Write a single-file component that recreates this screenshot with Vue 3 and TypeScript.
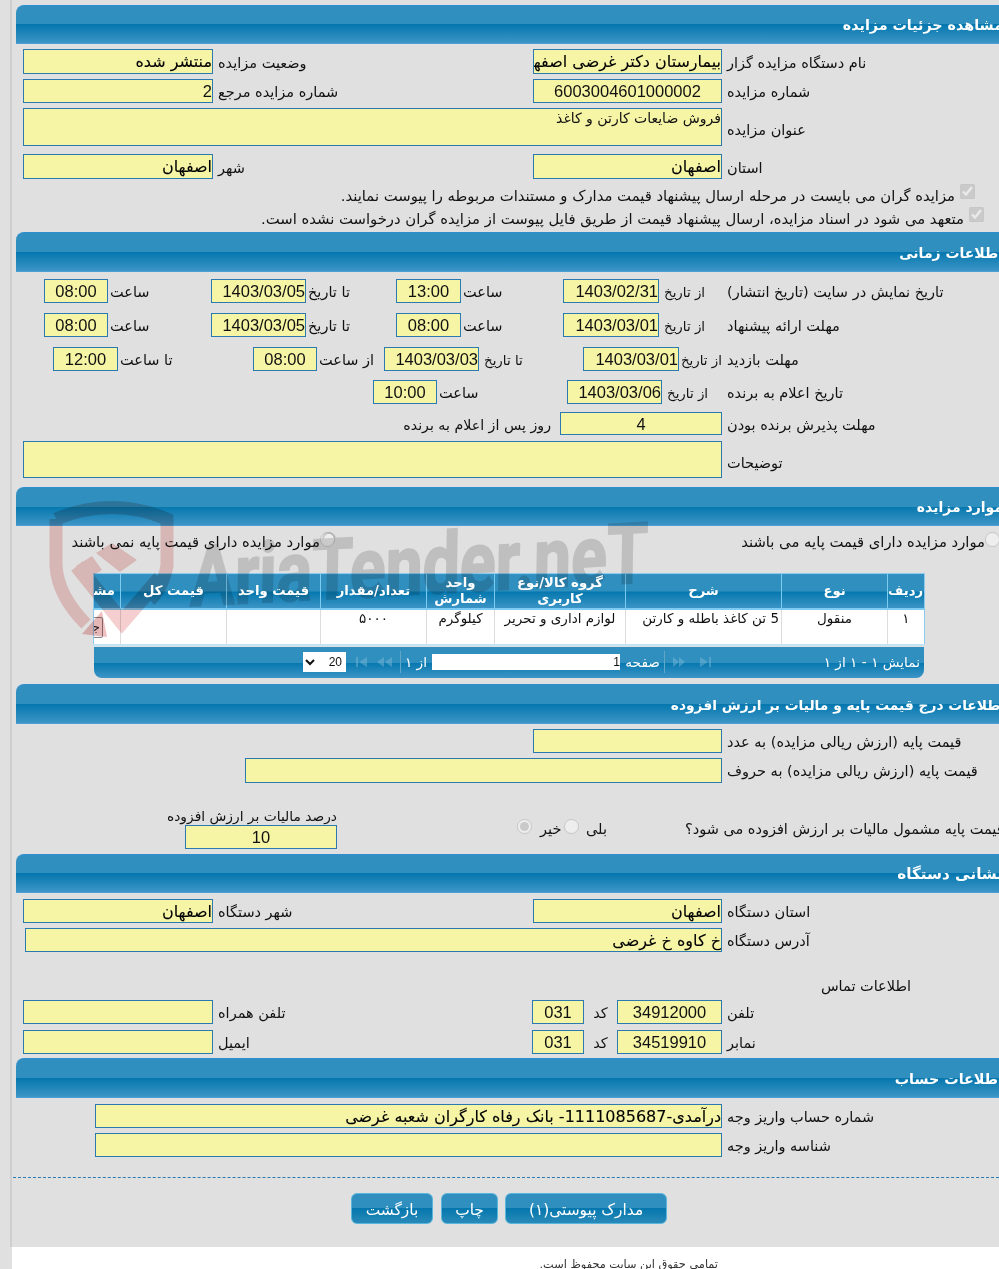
<script setup lang="ts">
const cols: string[] = ['ردیف', 'نوع', 'شرح', 'گروه کالا/نوع کاربری', 'واحد شمارش', 'تعداد/مقدار', 'قیمت واحد', 'قیمت کل', 'مشاهده']
const cells: string[] = ['۱', 'منقول', '5 تن کاغذ باطله و کارتن', 'لوازم اداری و تحریر', 'کیلوگرم', '۵۰۰۰', '', '']
</script>

<template>
  <div class="page">
    <div class="main">
      <div class="head first">مشاهده جزئیات مزایده</div>
      <div class="r g2 h25 m5">
        <div class="lab">نام دستگاه مزایده گزار</div>
        <div class="box strong">بیمارستان دکتر غرضی اصفهان</div>
        <div class="lab">وضعیت مزایده</div>
        <div class="box strong">منتشر شده</div>
      </div>
      <div class="r g2 h24 m5">
        <div class="lab">شماره مزایده</div>
        <div class="box center">6003004601000002</div>
        <div class="lab">شماره مزایده مرجع</div>
        <div class="box">2</div>
      </div>
      <div class="r gw h38 m5">
        <div class="lab lo">عنوان مزایده</div>
        <div class="box top small">فروش ضایعات کارتن و کاغذ</div>
      </div>
      <div class="r g2 h25 m8">
        <div class="lab">استان</div>
        <div class="box strong">اصفهان</div>
        <div class="lab">شهر</div>
        <div class="box strong">اصفهان</div>
      </div>
      <div class="chk c1"><input type="checkbox" checked disabled /><span>مزایده گران می بایست در مرحله ارسال پیشنهاد قیمت مدارک و مستندات مربوطه را پیوست نمایند.</span></div>
      <div class="chk c2"><input type="checkbox" checked disabled /><span>متعهد می شود در اسناد مزایده، ارسال پیشنهاد قیمت از طریق فایل پیوست از مزایده گران درخواست نشده است.</span></div>

      <div class="head h2">اطلاعات زمانی</div>
      <div class="r t1 h24 m7">
        <div class="lab">تاریخ نمایش در سایت (تاریخ انتشار)</div>
        <div class="lab nar">از تاریخ</div>
        <div class="box">1403/02/31</div>
        <div class="lab p2">ساعت</div>
        <div class="box center">13:00</div>
        <div class="lab p2">تا تاریخ</div>
        <div class="box">1403/03/05</div>
        <div class="lab p2">ساعت</div>
        <div class="box center">08:00</div>
      </div>
      <div class="r t1 h24 m10">
        <div class="lab">مهلت ارائه پیشنهاد</div>
        <div class="lab nar">از تاریخ</div>
        <div class="box">1403/03/01</div>
        <div class="lab p2">ساعت</div>
        <div class="box center">08:00</div>
        <div class="lab p2">تا تاریخ</div>
        <div class="box">1403/03/05</div>
        <div class="lab p2">ساعت</div>
        <div class="box center">08:00</div>
      </div>
      <div class="r t3 h24 m10">
        <div class="lab">مهلت بازدید</div>
        <div class="lab nar">از تاریخ</div>
        <div class="box">1403/03/01</div>
        <div class="lab nar">تا تاریخ</div>
        <div class="box">1403/03/03</div>
        <div class="lab p2">از ساعت</div>
        <div class="box center">08:00</div>
        <div class="lab p2">تا ساعت</div>
        <div class="box center">12:00</div>
      </div>
      <div class="r t4 h24 m9">
        <div class="lab">تاریخ اعلام به برنده</div>
        <div class="lab nar">از تاریخ</div>
        <div class="box">1403/03/06</div>
        <div class="lab p2">ساعت</div>
        <div class="box center">10:00</div>
      </div>
      <div class="r t5 h23 m8">
        <div class="lab">مهلت پذیرش برنده بودن</div>
        <div class="box center">4</div>
        <div class="lab p9">روز پس از اعلام به برنده</div>
      </div>
      <div class="r gd h37 m6">
        <div class="lab lo">توضیحات</div>
        <div class="box"></div>
      </div>

      <div class="head h3">موارد مزایده</div>
      <div class="radios">
        <label class="rad ra"><input type="radio" disabled /><span>موارد مزایده دارای قیمت پایه می باشند</span></label>
        <label class="rad rb"><input type="radio" disabled /><span>موارد مزایده دارای قیمت پایه نمی باشند</span></label>
      </div>
      <div class="grid-wrap">
        <table class="grid">
          <thead>
            <tr>
              <th v-for="c in cols" :key="c"><span>{{ c }}</span></th>
            </tr>
          </thead>
          <tbody>
            <tr>
              <td v-for="(c, i) in cells" :key="i">{{ c }}</td>
              <td class="act"><button class="mini" type="button">جزئیات</button></td>
            </tr>
          </tbody>
        </table>
        <div class="pager">
          <div class="status">نمایش ۱ - ۱ از ۱</div>
          <svg class="pi w12" viewBox="0 0 12 10"><path d="M0 0 L8 5 L0 10 Z M9 0 H11 V10 H9 Z" /></svg>
          <svg class="pi w12 g15" viewBox="0 0 12 10"><path d="M0 0 L6 5 L0 10 Z M6 0 L12 5 L6 10 Z" /></svg>
          <i class="sep s8"></i>
          <div class="plab">صفحه</div>
          <div class="pinput">1</div>
          <div class="pof">از ۱</div>
          <i class="sep s6"></i>
          <svg class="pi w15 g8" viewBox="0 0 15 10"><path d="M7 0 L0 5 L7 10 Z M15 0 L8 5 L15 10 Z" /></svg>
          <svg class="pi w12 g10" viewBox="0 0 12 10"><path d="M12 0 L4 5 L12 10 Z M1 0 H3 V10 H1 Z" /></svg>
          <select class="psel"><option>20</option></select>
        </div>
      </div>

      <div class="head h4">اطلاعات درج قیمت پایه و مالیات بر ارزش افزوده</div>
      <div class="r gw2 h24 m5">
        <div class="lab">قیمت پایه (ارزش ریالی مزایده) به عدد</div>
        <div class="box"></div>
      </div>
      <div class="r gw3 h25 m5">
        <div class="lab">قیمت پایه (ارزش ریالی مزایده) به حروف</div>
        <div class="box"></div>
      </div>
      <div class="taxrow">
        <div class="taxq">قیمت پایه مشمول مالیات بر ارزش افزوده می شود؟</div>
        <label class="rad rc"><input type="radio" disabled /><span>بلی</span></label>
        <label class="rad rd"><input type="radio" checked disabled /><span>خیر</span></label>
        <div class="tax">
          <div class="taxl">درصد مالیات بر ارزش افزوده</div>
          <div class="box center taxb">10</div>
        </div>
      </div>

      <div class="head h5">نشانی دستگاه</div>
      <div class="r g2 h24 m6">
        <div class="lab">استان دستگاه</div>
        <div class="box strong">اصفهان</div>
        <div class="lab">شهر دستگاه</div>
        <div class="box strong">اصفهان</div>
      </div>
      <div class="r ga h24 m5">
        <div class="lab">آدرس دستگاه</div>
        <div class="box strong">خ کاوه خ غرضی</div>
      </div>
      <div class="contact">اطلاعات تماس</div>
      <div class="r tel h24">
        <div class="lab">تلفن</div>
        <div class="box center">34912000</div>
        <div class="lab p12">کد</div>
        <div class="box center">031</div>
        <div class="lab">تلفن همراه</div>
        <div class="box"></div>
      </div>
      <div class="r tel h24 m6">
        <div class="lab">نمابر</div>
        <div class="box center">34519910</div>
        <div class="lab p12">کد</div>
        <div class="box center">031</div>
        <div class="lab">ایمیل</div>
        <div class="box"></div>
      </div>

      <div class="head h6">اطلاعات حساب</div>
      <div class="r gb h24 m6">
        <div class="lab">شماره حساب واریز وجه</div>
        <div class="box strong">درآمدی-1111085687- بانک رفاه کارگران شعبه غرضی</div>
      </div>
      <div class="r gb h24 m5">
        <div class="lab">شناسه واریز وجه</div>
        <div class="box"></div>
      </div>
      <div class="dash"></div>
      <div class="btns">
        <button class="btn b1" type="button">مدارک پیوستی(۱)</button>
        <button class="btn b2" type="button">چاپ</button>
        <button class="btn b3" type="button">بازگشت</button>
      </div>
    </div>
    <div class="foot">تمامی حقوق این سایت محفوظ است.</div>

    <svg class="mark" viewBox="0 0 999 1269" width="999" height="1269">
      <g fill="none" stroke="#f5cfcf" stroke-width="13">
        <path d="M56 519 Q112 496 167 519 V566 Q162 590 150 600" />
        <path d="M56 519 V566 Q58 596 86 624" />
      </g>
      <path d="M77 566 L122 622 L160 578" fill="none" stroke="#f5cfcf" stroke-width="15" />
      <path d="M76 566 L92 556 L102 570 L86 580 Z M96 553 L112 543 L137 560 L120 572 Z" fill="#f5cfcf" />
      <path d="M82 634 L107 637 L102 611 Z" fill="#f0bfbf" />
      <text class="mtext" transform="translate(190 606) rotate(-3) skewX(-4)" textLength="458" lengthAdjust="spacingAndGlyphs">AriaTender.neT</text>
      <circle cx="329" cy="539" r="6" fill="none" stroke="#d8d8d8" stroke-width="2" />
    </svg>
  </div>
</template>

<style>
html, body { margin: 0; padding: 0; background: #fff; }
</style>

<style scoped>
.page {
  position: relative;
  isolation: isolate;
  width: 999px;
  height: 1269px;
  overflow: hidden;
  background: #e0e0e0;
  font-family: "DejaVu Sans", "Liberation Sans", sans-serif;
  font-size: 14.5px;
  color: #111;
}
.main {
  height: 1247px;
  background: #e0e0e0;
  border-left: 2px solid #cfcfcf;
  margin-left: 10px;
  overflow: hidden;
  position: relative;
  box-sizing: border-box;
  width: 989px;
  padding-top: 5px;
}
.head {
  box-sizing: border-box;
  height: 39px;
  margin-left: 4px;
  margin-right: -20px;
  padding-right: 16px;
  direction: rtl;
  border-top: 1px solid #2d8ed0;
  border-bottom: 1px solid #4a9fd6;
  border-top-left-radius: 8px;
  background: linear-gradient(#308fbe 0, #2f8fbf 50%, #0477ae 50%, #3d95c6 100%);
  color: #fff;
  font-weight: 700;
  font-size: 14px;
  line-height: 39px;
  white-space: nowrap;
}
.first { font-size: 14.3px; }
.h2 { margin-top: 2px; height: 40px; line-height: 40px; }
.h3 { margin-top: 9px; }
.h4 { margin-top: 6px; height: 40px; padding-right: 14px; font-size: 13.8px; line-height: 40px; }
.h5 { margin-top: 5px; font-size: 15.2px; }
.h6 { margin-top: 4px; height: 40px; font-size: 14.3px; line-height: 40px; }
.r {
  display: grid;
  direction: rtl;
  align-items: center;
  width: 999px;
  box-sizing: border-box;
  margin-left: -12px;
  position: relative;
}
.g2 { grid-template-columns: 277px 189px 320px 190px; }
.gw { grid-template-columns: 277px 699px; }
.gd { grid-template-columns: 277px 699px; }
.ga { grid-template-columns: 277px 697px; }
.gb { grid-template-columns: 277px 627px; }
.gw2 { grid-template-columns: 277px 189px; }
.gw3 { grid-template-columns: 277px 477px; }
.t1 { grid-template-columns: 277px 63px 96px 102px 65px 90px 95px 103px 64px; }
.t3 { grid-template-columns: 277px 43px 96px 104px 95px 67px 64px 135px 65px; }
.t4 { grid-template-columns: 277px 60px 95px 130px 64px; }
.t5 { grid-template-columns: 277px 162px auto; }
.tel { grid-template-columns: 277px 105px 33px 52px 319px 190px; }
.h23 { height: 23px; }
.h24 { height: 24px; }
.h25 { height: 25px; }
.h37 { height: 37px; }
.h38 { height: 38px; }
.m5 { margin-top: 5px; }
.m6 { margin-top: 6px; }
.m7 { margin-top: 7px; }
.m8 { margin-top: 8px; }
.m9 { margin-top: 9px; }
.m10 { margin-top: 10px; }
.lab {
  box-sizing: border-box;
  padding-left: 5px;
  padding-top: 2px;
  text-align: left;
  white-space: nowrap;
}
.lo { padding-top: 6px; }
.nar { font-size: 13.4px; }
.p2 { padding-left: 2px; }
.p12 { padding-left: 0; text-align: center; }
.p9 { padding-right: 9px; text-align: right; font-size: 14.2px; }
.box {
  box-sizing: border-box;
  height: 100%;
  border: 1px solid #2a7ab0;
  background: #f6f5a6;
  font-family: "Liberation Sans", "DejaVu Sans", sans-serif;
  font-size: 16.5px;
  line-height: 23px;
  white-space: nowrap;
  overflow: hidden;
  text-align: right;
  color: #111;
  padding-left: 0;
}
.strong {
  font-family: "DejaVu Sans", sans-serif;
  font-size: 16px;
  color: #000;
  -webkit-text-stroke: 0.1px #000;
}
.center { text-align: center; }
.top { line-height: 18px; }
.small { font-family: "DejaVu Sans", sans-serif; font-size: 14px; }
.chk {
  direction: rtl;
  display: flex;
  align-items: flex-start;
  white-space: nowrap;
  height: 23px;
  line-height: 24px;
  font-size: 14.8px;
}
.c1 { margin-top: 5px; padding-right: 24px; }
.c2 { margin-top: 0; padding-right: 15px; }
.chk input { width: 15px; height: 15px; margin: 0 0 0 5px; flex: none; }
.radios {
  position: relative;
  height: 47px;
  direction: rtl;
  margin-left: -12px;
  width: 999px;
  font-size: 14.8px;
}
.rad {
  display: flex;
  direction: rtl;
  align-items: center;
  white-space: nowrap;
}
.rad input { width: 15px; height: 15px; margin: -5px 0 0; flex: none; }
.ra { float: right; margin-top: 7px; margin-right: -1px; }
.rb { position: absolute; right: 664px; top: 7px; }
.grid-wrap { margin-left: 81px; width: 832px; }
.grid {
  direction: rtl;
  table-layout: fixed;
  width: 832px;
  border-collapse: collapse;
  background: #fff;
  border: 1px solid #8ccbee;
}
.grid th:nth-child(1) { width: 37px; }
.grid th:nth-child(2) { width: 106px; }
.grid th:nth-child(3) { width: 156px; }
.grid th:nth-child(4) { width: 131px; }
.grid th:nth-child(5) { width: 68px; }
.grid th:nth-child(6) { width: 106px; }
.grid th:nth-child(7) { width: 94px; }
.grid th:nth-child(8) { width: 106px; }
.grid th:nth-child(9) { width: 27px; }
.grid th {
  box-sizing: border-box;
  height: 35px;
  padding: 0 1px;
  font-size: 13.2px;
  font-weight: 700;
  color: #fff;
  line-height: 16px;
  background: linear-gradient(#308fbe 0, #2f8fbf 50%, #0477ae 50%, #3d95c6 100%);
  border-left: 1px solid #7ccbf0;
  border-bottom: 2px solid #7ccbf0;
  overflow: hidden;
}
.grid th span { position: relative; z-index: 2; }
.grid th:last-child { white-space: nowrap; text-align: right; padding-right: 5px; border-left: 0; }
.grid td {
  box-sizing: border-box;
  height: 36px;
  padding: 0 2px;
  font-size: 13.5px;
  vertical-align: top;
  text-align: center;
  border-left: 1px solid #dcdcdc;
  overflow: hidden;
  white-space: nowrap;
  border-bottom: 2px solid #c4e3f5;
}
.grid td:nth-child(3) { text-align: right; }
.grid td.act { padding: 7px 17px 0 0; text-align: right; border-left: 0; }
.mini {
  display: block;
  width: 40px;
  height: 21px;
  padding: 0 2px;
  font: 12px "DejaVu Sans", sans-serif;
  background: #f4f4f4;
  border: 1px solid #888;
  border-radius: 2px;
  color: #222;
  white-space: nowrap;
}
.pager {
  box-sizing: border-box;
  display: flex;
  direction: rtl;
  align-items: center;
  height: 31px;
  width: 830px;
  margin: 1px 0 0 1px;
  background: linear-gradient(#308fbe 0, #2f8fbf 50%, #0477ae 50%, #3d95c6 100%);
  border-bottom-left-radius: 8px;
  border-bottom-right-radius: 8px;
  color: #fff;
  font-size: 13.7px;
}
.status { width: 212px; box-sizing: border-box; padding-right: 4px; white-space: nowrap; }
.pi { height: 10px; fill: #7fbcd9; opacity: .45; flex: none; }
.w12 { width: 12px; }
.w15 { width: 15px; }
.g15 { margin-right: 15px; }
.g8 { margin-right: 8px; }
.g10 { margin-right: 10px; margin-left: 9px; }
.sep { display: block; width: 1px; height: 22px; background: #5fa6c9; flex: none; }
.s8 { margin-right: 8px; }
.s6 { margin-right: 6px; }
.plab { width: 35px; margin-right: 4px; white-space: nowrap; }
.pinput {
  box-sizing: border-box;
  width: 188px;
  height: 16px;
  margin-right: 5px;
  background: #fff;
  color: #111;
  font-family: "Liberation Sans", sans-serif;
  font-size: 12px;
  line-height: 16px;
}
.pof { width: 20px; margin-right: 5px; white-space: nowrap; }
.psel {
  width: 43px;
  height: 20px;
  padding: 0;
  border: 0;
  border-radius: 0;
  background: #fff;
  color: #111;
  font: 12px "Liberation Sans", sans-serif;
}
.taxrow {
  position: relative;
  height: 66px;
  direction: rtl;
  margin-left: -12px;
  width: 999px;
}
.taxq { position: absolute; left: 685px; top: 38px; white-space: nowrap; }
.rc { position: absolute; left: 564px; top: 38px; flex-direction: row-reverse; }
.rd { position: absolute; left: 517px; top: 38px; flex-direction: row-reverse; }
.rc span { margin-left: 7px; }
.rd span { margin-left: 8px; }
.tax { position: absolute; left: 162px; top: 22px; width: 175px; }
.taxl { white-space: nowrap; text-align: right; height: 20px; line-height: 22px; font-size: 13.8px; }
.taxb { width: 152px; height: 24px; }
.contact { margin-top: 24px; height: 24px; line-height: 20px; direction: rtl; margin-left: -12px; width: 999px; padding-right: 88px; box-sizing: border-box; }
.dash { height: 0; border-top: 1px dashed #2a7ab0; margin-top: 20px; margin-left: 1px; margin-right: -20px; }
.btns {
  display: flex;
  direction: rtl;
  gap: 7px;
  margin-left: -12px;
  width: 999px;
  padding-right: 332px;
  box-sizing: border-box;
  margin-top: 15px;
}
.btn {
  box-sizing: border-box;
  height: 31px;
  border: 1px solid #58b6dd;
  border-radius: 6px;
  background: linear-gradient(#308fbe 0, #2f8fbf 50%, #0477ae 50%, #2a8ab9 100%);
  color: #fff;
  font: 15.4px "DejaVu Sans", sans-serif;
  padding: 3px 0 0;
}
.b1 { width: 162px; }
.b2 { width: 57px; }
.b3 { width: 82px; margin-right: 1px; }
.foot {
  margin-left: 12px;
  height: 22px;
  box-sizing: border-box;
  background: #fff;
  direction: rtl;
  padding-right: 281px;
  padding-top: 11px;
  font-size: 11.3px;
  color: #333;
  white-space: nowrap;
  filter: blur(0.4px);
}
.mark { position: absolute; left: 0; top: 0; pointer-events: none; mix-blend-mode: multiply; z-index: 1; }
.mtext {
  font-family: Roboto, "Liberation Sans", sans-serif;
  font-weight: 700;
  font-size: 84px;
  fill: #dadada;
  stroke: #dadada;
  stroke-width: 2px;
}
</style>
